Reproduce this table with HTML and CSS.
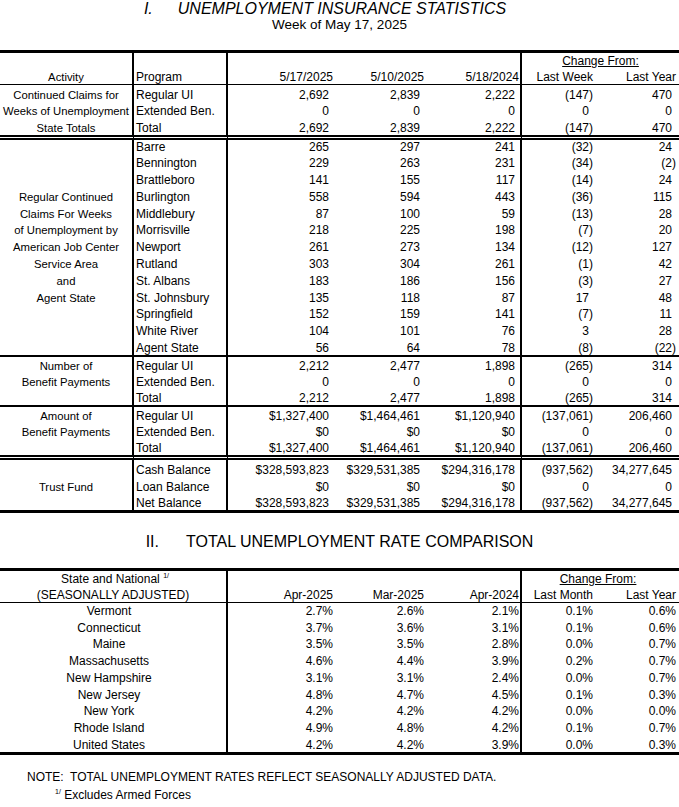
FILE: index.html
```html
<!DOCTYPE html>
<html lang="en">
    <head>
        <meta charset="UTF-8">
        <meta name="viewport" content="width=device-width, initial-scale=1.0">
        <title>Unemployment Insurance Statistics</title>

        <!-- CSS -->
        <link rel="stylesheet" href="styles.css">
    </head>
    <body>
        <h1 class="title title-one"><span class="num">I.</span>UNEMPLOYMENT INSURANCE STATISTICS</h1>
        <p class="subtitle">Week of May 17, 2025</p>

        <table class="stats">
            <colgroup>
                <col class="w1"><col class="w2"><col class="w3"><col class="w4"><col class="w5"><col class="w6"><col class="w7">
            </colgroup>
            <thead>
                <tr class="head1">
                    <th></th><th></th><th></th><th></th><th></th>
                    <th colspan="2" class="change"><u>Change From:</u></th>
                </tr>
                <tr class="head2">
                    <th>Activity</th><th>Program</th><th>5/17/2025</th><th>5/10/2025</th><th>5/18/2024</th><th>Last Week</th><th>Last Year</th>
                </tr>
            </thead>

            <!-- state totals -->
            <tbody class="totals">
                <tr><td>Continued Claims for</td><td>Regular UI</td><td>2,692</td><td>2,839</td><td>2,222</td><td><span class="neg">(147)</span></td><td>470</td></tr>
                <tr><td>Weeks of Unemployment</td><td>Extended Ben.</td><td>0</td><td>0</td><td>0</td><td>0</td><td>0</td></tr>
                <tr><td>State Totals</td><td>Total</td><td>2,692</td><td>2,839</td><td>2,222</td><td><span class="neg">(147)</span></td><td>470</td></tr>
            </tbody>

            <!-- job centers -->
            <tbody class="cities">
                <tr><td></td><td>Barre</td><td>265</td><td>297</td><td>241</td><td><span class="neg">(32)</span></td><td>24</td></tr>
                <tr><td></td><td>Bennington</td><td>229</td><td>263</td><td>231</td><td><span class="neg">(34)</span></td><td><span class="neg">(2)</span></td></tr>
                <tr><td></td><td>Brattleboro</td><td>141</td><td>155</td><td>117</td><td><span class="neg">(14)</span></td><td>24</td></tr>
                <tr><td>Regular Continued</td><td>Burlington</td><td>558</td><td>594</td><td>443</td><td><span class="neg">(36)</span></td><td>115</td></tr>
                <tr><td>Claims For Weeks</td><td>Middlebury</td><td>87</td><td>100</td><td>59</td><td><span class="neg">(13)</span></td><td>28</td></tr>
                <tr><td>of Unemployment by</td><td>Morrisville</td><td>218</td><td>225</td><td>198</td><td><span class="neg">(7)</span></td><td>20</td></tr>
                <tr><td>American Job Center</td><td>Newport</td><td>261</td><td>273</td><td>134</td><td><span class="neg">(12)</span></td><td>127</td></tr>
                <tr><td>Service Area</td><td>Rutland</td><td>303</td><td>304</td><td>261</td><td><span class="neg">(1)</span></td><td>42</td></tr>
                <tr><td>and</td><td>St. Albans</td><td>183</td><td>186</td><td>156</td><td><span class="neg">(3)</span></td><td>27</td></tr>
                <tr><td>Agent State</td><td>St. Johnsbury</td><td>135</td><td>118</td><td>87</td><td>17</td><td>48</td></tr>
                <tr><td></td><td>Springfield</td><td>152</td><td>159</td><td>141</td><td><span class="neg">(7)</span></td><td>11</td></tr>
                <tr><td></td><td>White River</td><td>104</td><td>101</td><td>76</td><td>3</td><td>28</td></tr>
                <tr><td></td><td>Agent State</td><td>56</td><td>64</td><td>78</td><td><span class="neg">(8)</span></td><td><span class="neg">(22)</span></td></tr>
            </tbody>

            <!-- benefit payments -->
            <tbody class="number">
                <tr><td>Number of</td><td>Regular UI</td><td>2,212</td><td>2,477</td><td>1,898</td><td><span class="neg">(265)</span></td><td>314</td></tr>
                <tr><td>Benefit Payments</td><td>Extended Ben.</td><td>0</td><td>0</td><td>0</td><td>0</td><td>0</td></tr>
                <tr><td></td><td>Total</td><td>2,212</td><td>2,477</td><td>1,898</td><td><span class="neg">(265)</span></td><td>314</td></tr>
            </tbody>

            <tbody class="amount">
                <tr><td>Amount of</td><td>Regular UI</td><td>$1,327,400</td><td>$1,464,461</td><td>$1,120,940</td><td><span class="neg">(137,061)</span></td><td>206,460</td></tr>
                <tr><td>Benefit Payments</td><td>Extended Ben.</td><td>$0</td><td>$0</td><td>$0</td><td>0</td><td>0</td></tr>
                <tr><td></td><td>Total</td><td>$1,327,400</td><td>$1,464,461</td><td>$1,120,940</td><td><span class="neg">(137,061)</span></td><td>206,460</td></tr>
            </tbody>

            <!-- trust fund -->
            <tbody class="trust">
                <tr><td></td><td>Cash Balance</td><td>$328,593,823</td><td>$329,531,385</td><td>$294,316,178</td><td><span class="neg">(937,562)</span></td><td>34,277,645</td></tr>
                <tr><td>Trust Fund</td><td>Loan Balance</td><td>$0</td><td>$0</td><td>$0</td><td>0</td><td>0</td></tr>
                <tr><td></td><td>Net Balance</td><td>$328,593,823</td><td>$329,531,385</td><td>$294,316,178</td><td><span class="neg">(937,562)</span></td><td>34,277,645</td></tr>
            </tbody>
        </table>

        <h2 class="title title-two"><span class="num">II.</span>TOTAL UNEMPLOYMENT RATE COMPARISON</h2>

        <table class="rates">
            <colgroup>
                <col class="w1"><col class="w2"><col class="w3"><col class="w4"><col class="w5"><col class="w6"><col class="w7">
            </colgroup>
            <thead>
                <tr class="head1">
                    <th colspan="2">State and National <sup>1/</sup></th><th></th><th></th><th></th>
                    <th colspan="2" class="change"><u>Change From:</u></th>
                </tr>
                <tr class="head2">
                    <th colspan="2">(SEASONALLY ADJUSTED)</th><th>Apr-2025</th><th>Mar-2025</th><th>Apr-2024</th><th>Last Month</th><th>Last Year</th>
                </tr>
            </thead>
            <tbody>
                <tr><td colspan="2">Vermont</td><td>2.7%</td><td>2.6%</td><td>2.1%</td><td>0.1%</td><td>0.6%</td></tr>
                <tr><td colspan="2">Connecticut</td><td>3.7%</td><td>3.6%</td><td>3.1%</td><td>0.1%</td><td>0.6%</td></tr>
                <tr><td colspan="2">Maine</td><td>3.5%</td><td>3.5%</td><td>2.8%</td><td>0.0%</td><td>0.7%</td></tr>
                <tr><td colspan="2">Massachusetts</td><td>4.6%</td><td>4.4%</td><td>3.9%</td><td>0.2%</td><td>0.7%</td></tr>
                <tr><td colspan="2">New Hampshire</td><td>3.1%</td><td>3.1%</td><td>2.4%</td><td>0.0%</td><td>0.7%</td></tr>
                <tr><td colspan="2">New Jersey</td><td>4.8%</td><td>4.7%</td><td>4.5%</td><td>0.1%</td><td>0.3%</td></tr>
                <tr><td colspan="2">New York</td><td>4.2%</td><td>4.2%</td><td>4.2%</td><td>0.0%</td><td>0.0%</td></tr>
                <tr><td colspan="2">Rhode Island</td><td>4.9%</td><td>4.8%</td><td>4.2%</td><td>0.1%</td><td>0.7%</td></tr>
                <tr><td colspan="2">United States</td><td>4.2%</td><td>4.2%</td><td>3.9%</td><td>0.0%</td><td>0.3%</td></tr>
            </tbody>
        </table>

        <p class="note">NOTE:&nbsp; TOTAL UNEMPLOYMENT RATES REFLECT SEASONALLY ADJUSTED DATA.</p>
        <p class="note note-sub"><sup>1/</sup> Excludes Armed Forces</p>
    </body>
</html>
```

FILE: styles.css
```css
/* Base */
*{
    margin: 0;
    padding: 0;
}

body{
    width: 679px;
    font-family: "Liberation Sans", Arial, Helvetica, sans-serif;
    font-size: 12px;
    color: #000;
    background: #fff;
}

/* Titles */
.title{
    font-size: 16px;
    font-weight: normal;
    line-height: 17px;
    text-align: center;
}

.title-one{
    font-style: italic;
    padding-right: 29px;
}

.title-one .num{
    margin-right: 25px;
}

.title-two{
    margin: 19.5px 0 18.5px;
}

.title-two .num{
    margin-right: 27px;
}

.subtitle{
    font-size: 13.5px;
    line-height: 16px;
    text-align: center;
    margin-bottom: 17px;
}

/* Tables */
table{
    width: 679px;
    table-layout: fixed;
    border-collapse: separate;
    border-spacing: 0;
    border-top: 3px solid #000;
    border-bottom: 3px solid #000;
}

.w1{ width: 134px; }
.w2{ width: 94px; }
.w3{ width: 108px; }
.w4{ width: 91px; }
.w5{ width: 95px; }
.w6{ width: 76px; }
.w7{ width: 81px; }

th, td{
    font-weight: normal;
    height: 16.5px;
    padding: 0;
    line-height: 14px;
    vertical-align: bottom;
    white-space: nowrap;
    text-align: right;
}

.head1 th{
    height: 15px;
}

.head2 th{
    height: 16px;
    border-bottom: 1px solid #000;
}

th.change{
    text-align: center;
}

/* row heights per block */
.cities td{
    height: 16.8px;
}

.cities tr:first-child td{
    height: 13.5px;
}

.number td, .amount td{
    height: 16px;
}

.trust td{
    height: 17px;
}

.trust tr:last-child td{
    height: 16px;
}

/* block separators */
.cities tr:last-child td, .number tr:last-child td{
    border-bottom: 2px solid #000;
}

.totals tr:last-child td, .amount tr:last-child td{
    border-bottom: 5px double #000;
}

/* negative values hang their closing paren past the column */
.neg{
    margin-right: -4px;
}

/* section I columns */
.stats tr > :nth-child(1){
    text-align: center;
    font-size: 11.3px;
    border-right: 2px solid #000;
}

.stats tr > :nth-child(2){
    text-align: left;
    padding-left: 2px;
    border-right: 2px solid #000;
}

.stats tr > :nth-child(5){
    border-right: 2px solid #000;
}

.stats .head2 th:nth-child(3){ padding-right: 3px; }
.stats .head2 th:nth-child(4){ padding-right: 3px; }
.stats .head2 th:nth-child(5){ padding-right: 1px; }
.stats .head2 th:nth-child(6){ padding-right: 5px; }
.stats .head2 th:nth-child(7){ padding-right: 3px; }

.stats td:nth-child(3){ padding-right: 7px; }
.stats td:nth-child(4){ padding-right: 7px; }
.stats td:nth-child(5){ padding-right: 5px; }
.stats td:nth-child(6){ padding-right: 9px; }
.stats td:nth-child(7){ padding-right: 7px; }

/* section II columns */
.rates tr > :nth-child(1){
    text-align: center;
    border-right: 2px solid #000;
}

.rates tbody td:first-child{
    padding-right: 8px;
}

.rates tr > :nth-child(4){
    border-right: 2px solid #000;
}

.rates tbody td{
    height: 16.7px;
}

.rates tbody tr:first-child td{
    height: 15px;
}

.rates tr > :nth-child(2){ padding-right: 3px; }
.rates tr > :nth-child(3){ padding-right: 3px; }
.rates tr > :nth-child(4){ padding-right: 1px; }
.rates tr > :nth-child(5){ padding-right: 5px; }
.rates tr > :nth-child(6){ padding-right: 3px; }

.rates .head1 th:first-child{
    padding-left: 4px;
}

sup{
    font-size: 7px;
    line-height: 0;
    vertical-align: 5px;
}

/* Notes */
.note{
    line-height: 14px;
    margin: 15.5px 0 0 27px;
}

.note-sub{
    margin: 4px 0 0 55px;
}
```
